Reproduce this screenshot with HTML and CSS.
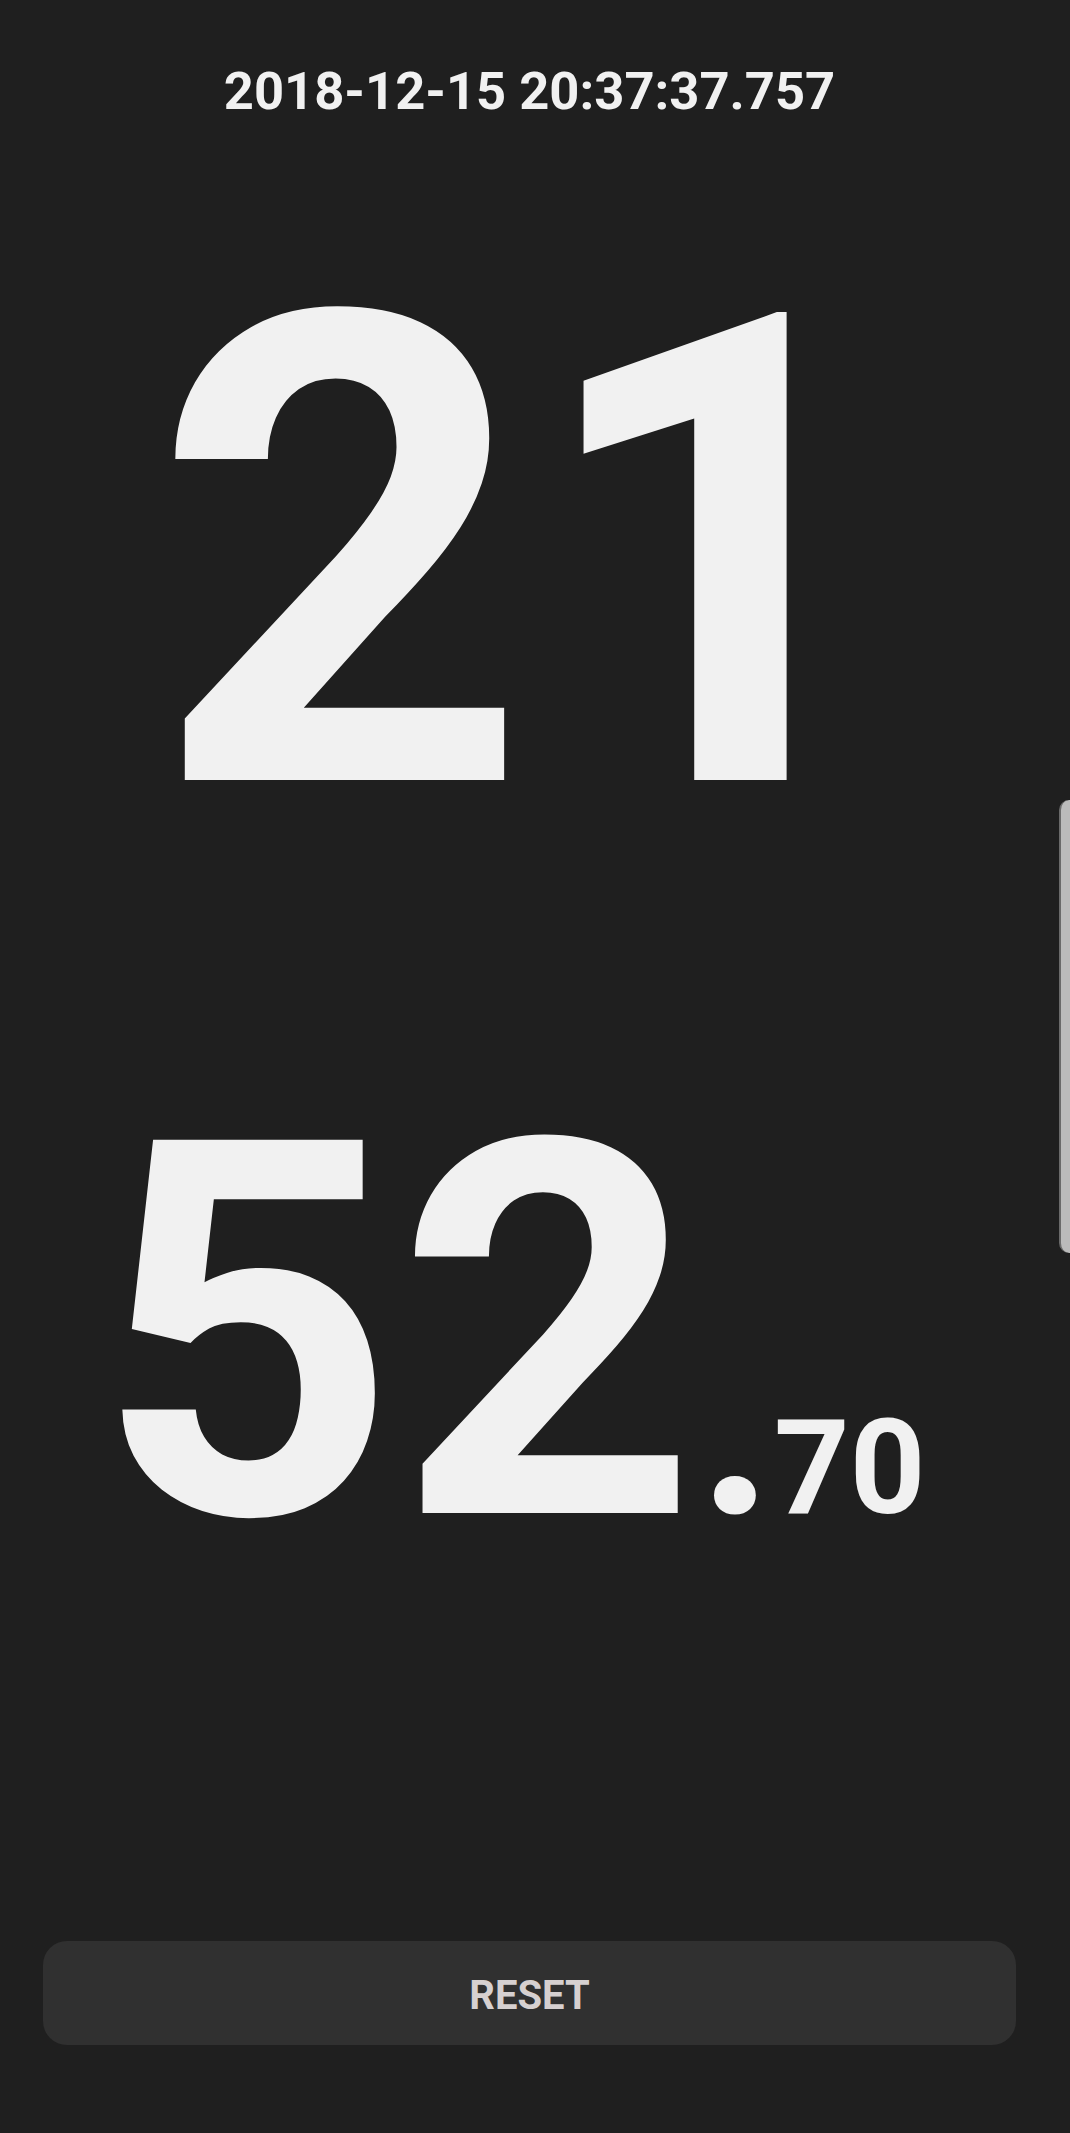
FILE: index.html
```html
<!DOCTYPE html>
<html lang="en">
<head>
<meta charset="utf-8">
<title>Clock</title>
<link rel="stylesheet" href="styles.css">
</head>
<body>
<div class="screen">
  <main class="content">
    <div class="timestamp">2018-12-15 20:37:37.757</div>
    <div class="hours">21</div>
    <div class="minutes"><span class="min-main">52</span><span class="min-dot">.</span><span class="min-frac">70</span></div>
    <div class="spacer"></div>
    <button class="reset" type="button">RESET</button>
  </main>
  <div class="edge-handle"></div>
</div>
</body>
</html>
```
FILE: styles.css
```css
html, body {
  margin: 0;
  padding: 0;
  background: #1f1f1f;
}

body {
  width: 1070px;
  height: 2133px;
  overflow: hidden;
  font-family: Roboto, "Liberation Sans", sans-serif;
  color: #f1f1f1;
}

.screen {
  position: relative;
  width: 1070px;
  height: 2133px;
}

.content {
  width: 1059px;
  height: 2133px;
  display: flex;
  flex-direction: column;
  align-items: center;
  box-sizing: border-box;
  padding-top: 65px;
  padding-bottom: 88px;
}

.timestamp {
  font-size: 52.5px;
  line-height: 53px;
  font-weight: 700;
  white-space: nowrap;
}

.hours {
  margin-top: 109px;
  font-size: 657px;
  line-height: 657px;
  font-weight: 700;
  white-space: nowrap;
}

.minutes {
  margin-top: 187px;
  margin-right: 38px;
  font-size: 525px;
  line-height: 525px;
  font-weight: 700;
  white-space: nowrap;
}

.min-dot {
  font-size: 262px;
  line-height: 1;
}

.min-frac {
  font-size: 132px;
  line-height: 1;
}

.spacer {
  flex: 1;
}

.reset {
  width: 973px;
  height: 104px;
  border: none;
  border-radius: 24px;
  background: #303030;
  color: #d6d0d0;
  font-family: Roboto, "Liberation Sans", sans-serif;
  font-size: 40px;
  font-weight: 700;
  letter-spacing: 0;
  padding: 4px 0 0;
}

.edge-handle {
  position: absolute;
  right: 0;
  top: 800px;
  width: 9px;
  height: 453px;
  background: #bbbbbb;
  border-left: 2px solid #6a6a6a;
  border-radius: 10px 0 0 10px;
}
```
